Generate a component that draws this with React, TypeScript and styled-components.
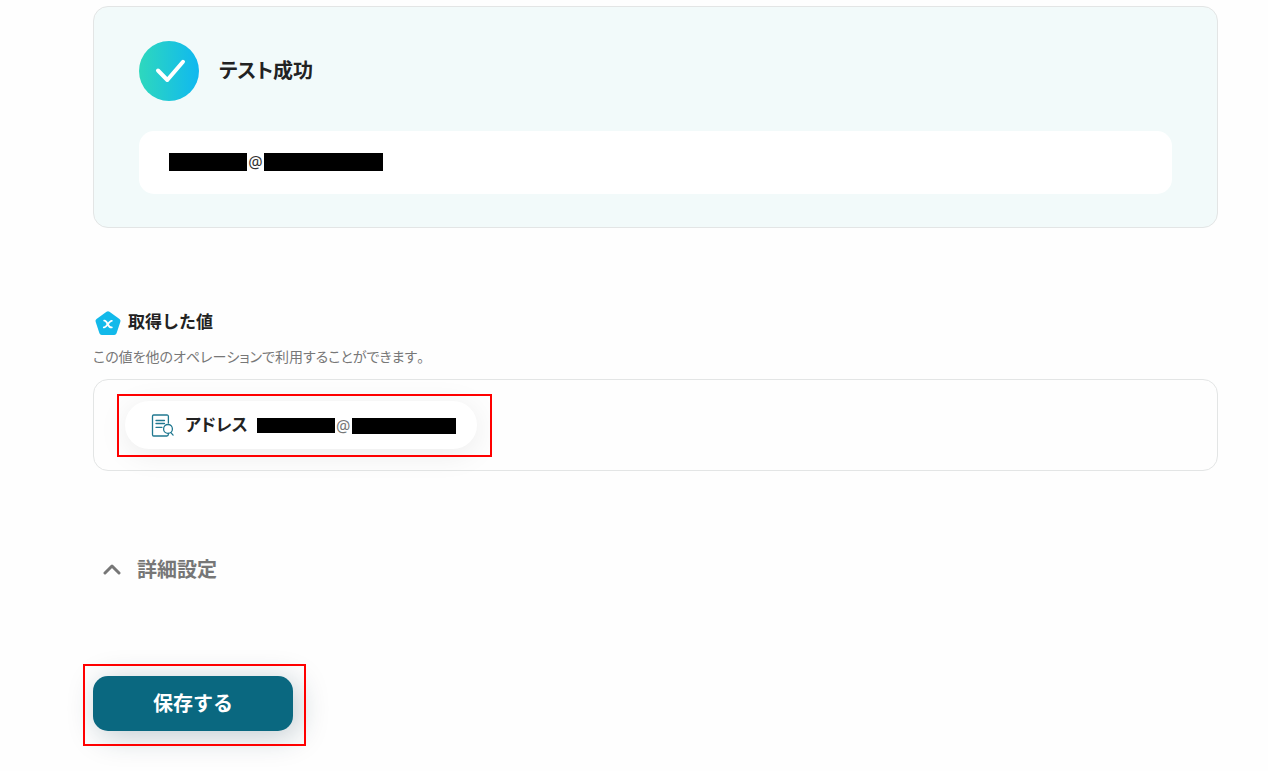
import React from "react";
import styled, { createGlobalStyle } from "styled-components";

const GlobalStyle = createGlobalStyle`
  *, *::before, *::after { box-sizing: border-box; }
  body {
    margin: 0;
    background: #fefefe;
    color: #222;
    font-family: "Noto Sans CJK JP", "Noto Sans", sans-serif;
    font-feature-settings: "palt";
    font-kerning: none;
  }
  h2, h3, p { margin: 0; }
  button { font: inherit; font-feature-settings: inherit; font-kerning: inherit; border: 0; cursor: pointer; }
`;

const Page = styled.main`
  padding: 6px 50px 40px 93px;
`;

const Panel = styled.section<{ $tinted?: boolean }>`
  border: 1px solid #e3e5e5;
  border-radius: 15px;
  background: ${(p) => (p.$tinted ? "#f2fafa" : "transparent")};
  padding: ${(p) => (p.$tinted ? "34px 45px 33px" : "21px 31px")};
`;

const ResultHead = styled.div`
  display: flex;
  align-items: center;
  gap: 20px;
  margin-bottom: 30px;
`;

const ResultTitle = styled.h2`
  padding-bottom: 2px;
  font-size: 20px;
  line-height: 30px;
  font-weight: 700;
`;

const ResultBox = styled.div`
  display: flex;
  align-items: center;
  height: 63px;
  padding: 0 30px 2px;
  border-radius: 15px;
  background: #fff;
`;

const Address = styled.span<{ $muted?: boolean }>`
  display: flex;
  align-items: center;
  font-family: "Noto Sans", "Noto Sans CJK JP", sans-serif;
  font-size: 16px;
  line-height: 24px;
  font-weight: 400;
  color: ${(p) => (p.$muted ? "#777" : "#333")};
`;

const Redacted = styled.span<{ $width: number; $height: number }>`
  width: ${(p) => p.$width}px;
  height: ${(p) => p.$height}px;
  background: #000;
`;

const At = styled.span`
  width: 17px;
  text-align: center;
`;

const Values = styled.div`
  margin-top: 80px;
`;

const ValuesHead = styled.div`
  display: flex;
  align-items: flex-start;
  gap: 5px;
`;

const ValuesTitle = styled.h3`
  font-size: 17px;
  line-height: 26px;
  font-weight: 700;
  font-feature-settings: normal;
`;

const Hint = styled.p`
  margin: 8px 0 12px;
  font-size: 14px;
  line-height: 21px;
  color: #777;
`;

const Marked = styled.div<{ $inset: string }>`
  position: relative;
  width: fit-content;

  &::after {
    content: "";
    position: absolute;
    inset: ${(p) => p.$inset};
    border: 2px solid #f00;
    pointer-events: none;
  }
`;

const Chip = styled.button`
  display: flex;
  align-items: center;
  height: 48px;
  padding: 1px 21px 0 26px;
  border-radius: 24px;
  background: #fff;
  box-shadow: 0 5px 30px rgba(0, 0, 0, 0.08);
`;

const ChipLabel = styled.span`
  padding-bottom: 3px;
  margin: 0 9px 0 11px;
  font-size: 17px;
  line-height: 26px;
  font-weight: 700;
  color: #222;
`;

const Toggle = styled.button`
  display: flex;
  align-items: center;
  gap: 16px;
  margin-top: 83px;
  padding: 0 10px;
  background: none;
  color: #777;
  font-size: 20px;
  line-height: 30px;
  font-weight: 700;
`;

const Actions = styled.div`
  margin-top: 92px;
`;

const SaveButton = styled.button`
  display: block;
  width: 200px;
  height: 55px;
  padding: 0 0 2px;
  border-radius: 15px;
  background: #0a6880;
  color: #fff;
  font-size: 20px;
  line-height: 30px;
  font-weight: 700;
  font-feature-settings: normal;
  box-shadow: 5px 5px 30px rgba(10, 50, 70, 0.25);
`;

const SuccessIcon = () => (
  <svg width="60" height="60" viewBox="0 0 60 60" aria-hidden="true">
    <defs>
      <linearGradient id="success" x1="0" y1="0" x2="1" y2="0">
        <stop offset="0" stopColor="#2ed8bd" />
        <stop offset="1" stopColor="#10b8f0" />
      </linearGradient>
    </defs>
    <circle cx="30" cy="30" r="30" fill="url(#success)" />
    <path d="M19 29.5 28.3 39 44 20.8" fill="none" stroke="#fff" strokeWidth="4" strokeLinecap="round" strokeLinejoin="round" />
  </svg>
);

const ValueIcon = () => (
  <svg width="30" height="30" viewBox="0 0 30 30" aria-hidden="true">
    <path d="M15 5.7 25 13 21.2 24.5 8.8 24.5 5 13Z" fill="#12b9ea" stroke="#12b9ea" strokeWidth="5" strokeLinejoin="round" />
    <g fill="none" stroke="#fff" strokeWidth="1.8" strokeLinecap="round">
      <path d="M11.2 12.6C14.7 11.8 14.4 20.4 18.8 19.4" />
      <path d="M18.8 12.8C16 12.2 13.8 20 10.8 19.4" />
    </g>
  </svg>
);

const DocumentIcon = () => (
  <svg width="23" height="23" viewBox="0 0 23 23" fill="none" stroke="#207890" strokeWidth="1.3" strokeLinecap="round" aria-hidden="true">
    <path d="M17.4 9V2.5Q17.4 1 15.9 1H2.6Q1.5 1 1.5 2.6V20.4Q1.5 22 2.6 22H15.9Q17.4 22 17.4 20V19.3" />
    <path d="M5 6.5H13.5M5 9.5H13.5M5 13.3H11" />
    <circle cx="17" cy="14.9" r="4.4" />
    <path d="M19.9 18.6 22.1 21.1" />
  </svg>
);

const ChevronIcon = () => (
  <svg width="18" height="12" viewBox="0 0 18 12" aria-hidden="true">
    <path d="M2 10 9 3 16 10" fill="none" stroke="#777" strokeWidth="3" strokeLinecap="round" strokeLinejoin="round" />
  </svg>
);

export default function App() {
  return (
    <>
      <GlobalStyle />
      <Page>
        <Panel $tinted>
          <ResultHead>
            <SuccessIcon />
            <ResultTitle>テスト成功</ResultTitle>
          </ResultHead>
          <ResultBox>
            <Address>
              <Redacted $width={78} $height={18} />
              <At>@</At>
              <Redacted $width={119} $height={18} />
            </Address>
          </ResultBox>
        </Panel>

        <Values>
          <ValuesHead>
            <ValueIcon />
            <ValuesTitle>取得した値</ValuesTitle>
          </ValuesHead>
          <Hint>この値を他のオペレーションで利用することができます。</Hint>
          <Panel>
            <Marked $inset="-7px -15px -8px -8px">
              <Chip type="button">
                <DocumentIcon />
                <ChipLabel>アドレス</ChipLabel>
                <Address $muted>
                  <Redacted $width={78} $height={15} />
                  <At>@</At>
                  <Redacted $width={104} $height={16} />
                </Address>
              </Chip>
            </Marked>
          </Panel>
        </Values>

        <Toggle type="button" aria-expanded="false">
          <ChevronIcon />
          詳細設定
        </Toggle>

        <Actions>
          <Marked $inset="-12px -13px -15px -10px">
            <SaveButton type="button">保存する</SaveButton>
          </Marked>
        </Actions>
      </Page>
    </>
  );
}
